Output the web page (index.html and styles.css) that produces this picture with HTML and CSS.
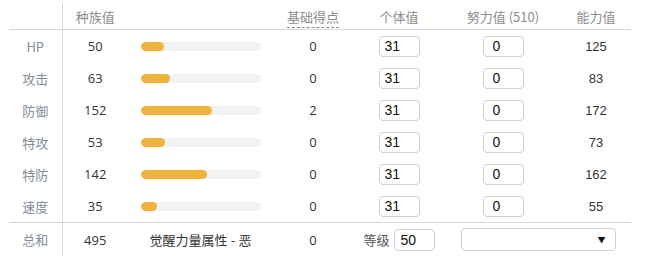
FILE: index.html
```html
<!DOCTYPE html>
<html>
<head>
<meta charset="utf-8">
<link rel="stylesheet" href="styles.css">
</head>
<body>
<table class="stats">
  <colgroup>
    <col class="c-label"><col class="c-base"><col class="c-bar"><col class="c-pts"><col class="c-iv"><col class="c-ev"><col class="c-val">
  </colgroup>
  <thead>
    <tr>
      <th class="label"></th>
      <th>种族值</th>
      <th></th>
      <th><span class="dashed">基础得点</span></th>
      <th>个体值</th>
      <th>努力值 (510)</th>
      <th>能力值</th>
    </tr>
  </thead>
  <tbody>
    <tr>
      <td class="label">HP</td><td>50</td>
      <td><div class="bar"><div class="fill" style="width:19.6%"></div></div></td>
      <td>0</td><td><input class="iv" value="31"></td><td><input class="ev" value="0"></td><td class="val">125</td>
    </tr>
    <tr>
      <td class="label">攻击</td><td>63</td>
      <td><div class="bar"><div class="fill" style="width:24.7%"></div></div></td>
      <td>0</td><td><input class="iv" value="31"></td><td><input class="ev" value="0"></td><td class="val">83</td>
    </tr>
    <tr>
      <td class="label">防御</td><td>152</td>
      <td><div class="bar"><div class="fill" style="width:59.6%"></div></div></td>
      <td>2</td><td><input class="iv" value="31"></td><td><input class="ev" value="0"></td><td class="val">172</td>
    </tr>
    <tr>
      <td class="label">特攻</td><td>53</td>
      <td><div class="bar"><div class="fill" style="width:20.8%"></div></div></td>
      <td>0</td><td><input class="iv" value="31"></td><td><input class="ev" value="0"></td><td class="val">73</td>
    </tr>
    <tr>
      <td class="label">特防</td><td>142</td>
      <td><div class="bar"><div class="fill" style="width:55.7%"></div></div></td>
      <td>0</td><td><input class="iv" value="31"></td><td><input class="ev" value="0"></td><td class="val">162</td>
    </tr>
    <tr class="last">
      <td class="label">速度</td><td>35</td>
      <td><div class="bar"><div class="fill" style="width:13.7%"></div></div></td>
      <td>0</td><td><input class="iv" value="31"></td><td><input class="ev" value="0"></td><td class="val">55</td>
    </tr>
  </tbody>
  <tfoot>
    <tr>
      <td class="label">总和</td><td>495</td>
      <td>觉醒力量属性 - 恶</td>
      <td>0</td>
      <td><span class="lv-label">等级</span><input class="lv" value="50"></td>
      <td colspan="2"><div class="select"><span class="arrow">▼</span></div></td>
    </tr>
  </tfoot>
</table>
</body>
</html>
```

FILE: styles.css
```css
html, body {
  margin: 0;
  padding: 0;
  background: #ffffff;
}
body {
  font-family: "Open Sans", "Noto Sans CJK SC", sans-serif;
  font-size: 13px;
  color: #333;
}
.stats {
  margin: 3px 0 0 9px;
  border-collapse: collapse;
  table-layout: fixed;
  width: 622px;
}
.c-label { width: 53px; }
.c-base { width: 66px; }
.c-bar { width: 145px; }
.c-pts { width: 80px; }
.c-iv { width: 92px; }
.c-ev { width: 116px; }
.c-val { width: 70px; }

.stats th, .stats td {
  padding: 0;
  text-align: center;
  vertical-align: middle;
  white-space: nowrap;
}
.stats th {
  height: 26px;
  font-weight: normal;
  color: #8c8c8c;
  border-bottom: 1px solid #d3d7de;
  font-family: "Noto Sans CJK SC", "Open Sans", sans-serif;
}
.stats tbody td {
  height: 32px;
}
.stats tbody tr.last td {
  border-bottom: 1px solid #d3d7de;
}
.stats tfoot td {
  height: 33px;
}
.stats .label {
  border-right: 1px solid #d3d7de;
  color: #828c9b;
  font-family: "Noto Sans CJK SC", sans-serif;
}
.dashed {
  border-bottom: 1px dashed #8c8c8c;
  padding-bottom: 1px;
}
.bar {
  width: 120px;
  height: 9px;
  margin: 0 auto;
  border-radius: 5px;
  background: #f2f2f2;
  overflow: hidden;
}
.fill {
  height: 100%;
  border-radius: 5px;
  background: #eeb33b;
}
input {
  box-sizing: border-box;
  height: 21px;
  width: 41px;
  border: 1px solid #cdd1d9;
  border-radius: 4px;
  font-family: "Liberation Sans", Arial, sans-serif;
  font-size: 14px;
  color: #111;
  margin: 0;
  vertical-align: middle;
}
input.iv { padding: 0 0 0 5px; }
input.ev { padding: 0 0 0 9px; }
input.lv { padding: 0 0 0 6px; height: 22px; }
.val {
  font-family: "Liberation Sans", Arial, sans-serif;
  color: #333;
}
.lv-label {
  color: #555;
  margin-right: 4px;
  vertical-align: middle;
  font-family: "Noto Sans CJK SC", sans-serif;
}
.select {
  box-sizing: border-box;
  width: 155px;
  height: 23px;
  margin: 0 auto;
  border: 1px solid #cdd1d9;
  border-radius: 4px;
  display: flex;
  align-items: center;
  justify-content: flex-end;
  padding-right: 9px;
}
.arrow {
  font-size: 8px;
  color: #111;
}
```
